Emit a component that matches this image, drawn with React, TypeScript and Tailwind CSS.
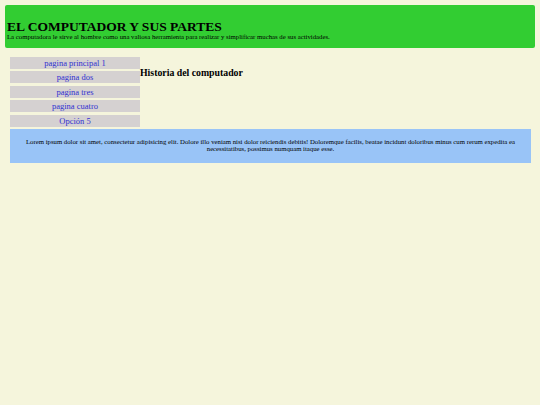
import React from "react";

const links = ["pagina principal 1", "pagina dos", "pagina tres", "pagina cuatro", "Opción 5"];

export default function App() {
  return (
    <div
      className="w-[540px] h-[405px] bg-[#f5f5dc] text-black"
      style={{ fontFamily: '"Liberation Serif", "Times New Roman", serif' }}
    >
      <div className="pt-[5px] px-[5px]">
        <header className="bg-[#32cd32] rounded-[2px] h-[43px] px-[2px] pt-[14px]">
          <h1 className="text-[13.5px] leading-[15px] font-bold">EL COMPUTADOR Y SUS PARTES</h1>
          <p className="text-[6.75px] leading-[8px] -mt-[1px]">
            La computadora le sirve al hombre como una valiosa herramienta para realizar y simplificar muchas de sus actividades.
          </p>
        </header>
      </div>

      <div className="px-[10px] pt-[9px] w-[540px]">
        <div className="flex">
          <nav className="w-[130px] flex flex-col gap-[2.4px]">
            {links.map((l) => (
              <a
                key={l}
                href="#"
                className="block h-[12px] bg-[#d5d1d1] text-center text-[8.5px] leading-[12px] text-[#3030d0]"
              >
                {l}
              </a>
            ))}
          </nav>
          <h2 className="text-[9.8px] leading-[12px] font-bold pt-[10px]">Historia del computador</h2>
        </div>

        <section className="mt-[2px] w-[521px] h-[34px] bg-[#99c4f7] px-[12px] pt-[9px]">
          <p className="text-[6.75px] leading-[7.5px] text-center">
            Lorem ipsum dolor sit amet, consectetur adipisicing elit. Dolore illo veniam nisi dolor reiciendis debitis! Doloremque facilis, beatae incidunt doloribus minus cum rerum expedita ea necessitatibus, possimus numquam itaque esse.
          </p>
        </section>
      </div>
    </div>
  );
}
